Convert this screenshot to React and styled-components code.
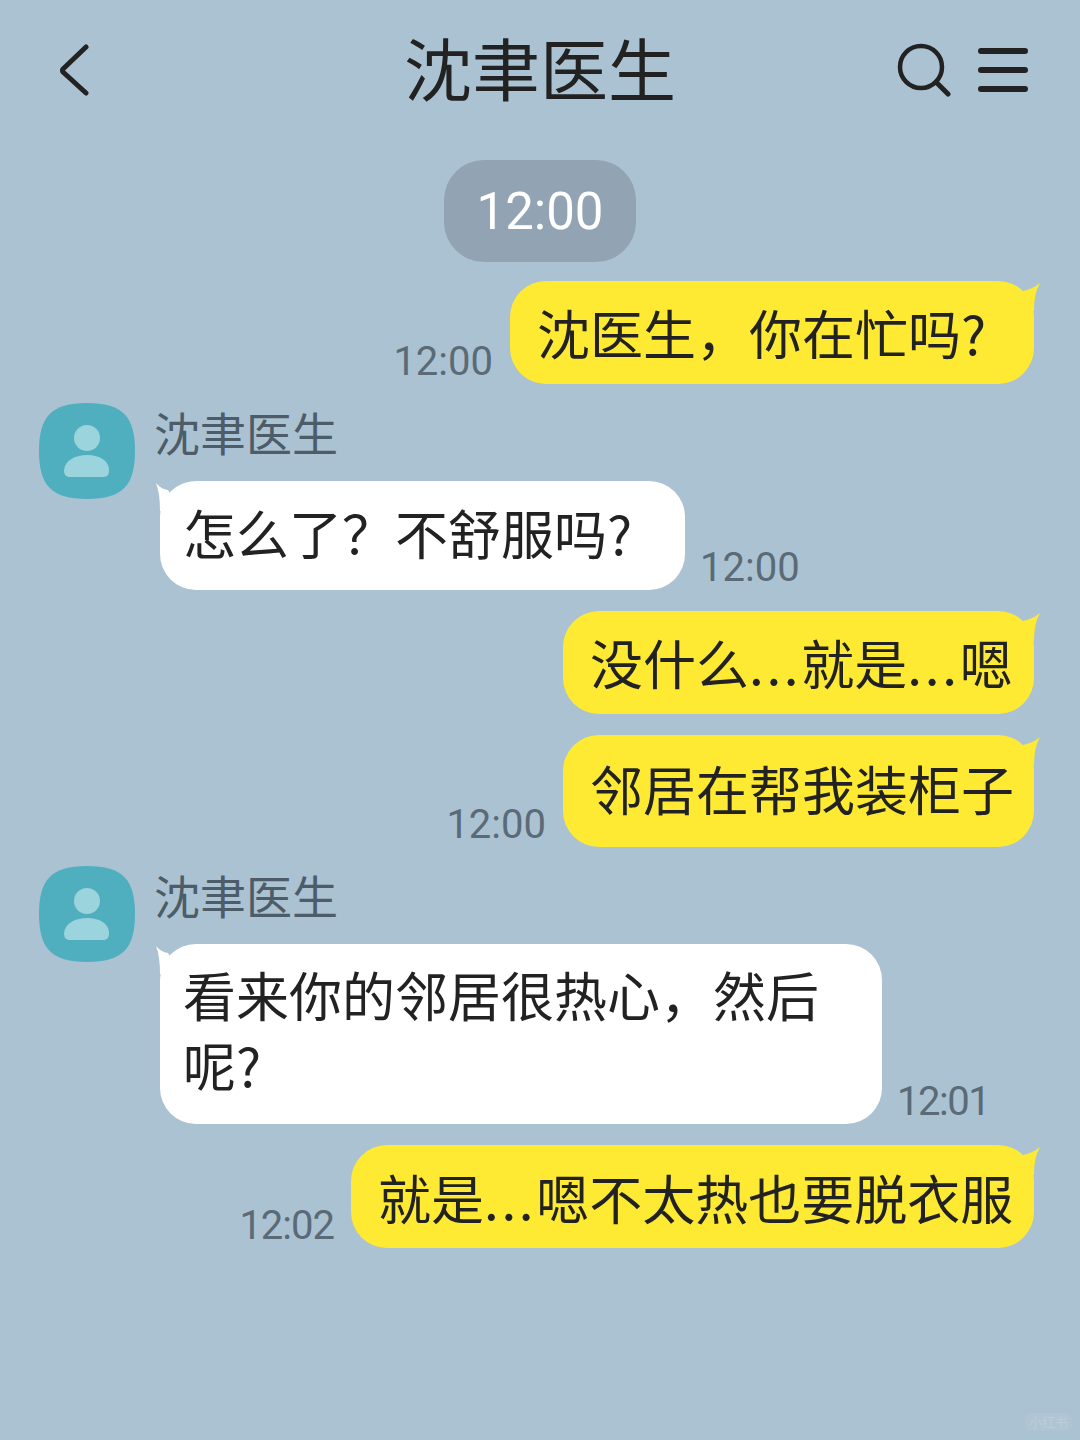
import { createGlobalStyle, styled } from "styled-components";

const GlobalStyle = createGlobalStyle`
  html, body {
    margin: 0;
    padding: 0;
    background: #abc2d2;
  }
`;

const Page = styled.div`
  position: relative;
  display: flex;
  flex-direction: column;
  width: 1080px;
  height: 1440px;
  overflow: hidden;
  background: #abc2d2;
  font-family: "Noto Sans CJK SC", "Noto Sans", sans-serif;
  color: #222;
`;

const Header = styled.header`
  display: grid;
  grid-template-columns: 1fr auto 1fr;
  align-items: center;
  height: 140px;
  padding: 0 52px 0 58px;
`;

const Title = styled.h1`
  margin: 0 6px 6px 0;
  font-size: 68px;
  font-weight: 400;
  line-height: 1;
  color: #222;
`;

const HeaderIcons = styled.div`
  justify-self: end;
  display: flex;
  align-items: center;
  gap: 27px;
`;

const TimePill = styled.div`
  align-self: center;
  display: flex;
  align-items: center;
  justify-content: center;
  width: 192px;
  height: 102px;
  margin: 20px 0 19px;
  border-radius: 40px;
  background: #92a4b4;
  color: #fff;
  font-family: Roboto, sans-serif;
  font-size: 51px;
  font-weight: 400;
`;

const Row = styled.div`
  display: flex;
  align-items: flex-end;
  justify-content: ${(p) => (p.$mine ? "flex-end" : "flex-start")};
  gap: ${(p) => (p.$mine ? "17px" : "15px")};
  margin-bottom: ${(p) => p.$after}px;
  padding: ${(p) => (p.$mine ? "0 46px 0 0" : "0 0 0 160px")};
`;

const Bubble = styled.div`
  position: relative;
  box-sizing: border-box;
  width: ${(p) => p.$width}px;
  height: ${(p) => p.$height}px;
  padding: ${(p) => p.$top}px 0 0 ${(p) => (p.$mine ? 27 : 23)}px;
  border-radius: 36px;
  background: ${(p) => (p.$mine ? "#ffea33" : "#ffffff")};
  font-size: 53px;
  line-height: 70px;
  color: #222;
  white-space: pre-line;

  &::before {
    content: "";
    position: absolute;
    top: 2px;
    ${(p) => (p.$mine ? "right: -6px;" : "left: -4px;")}
    width: 24px;
    height: 28px;
    background: inherit;
    clip-path: ${(p) =>
      p.$mine
        ? 'path("M7 8 Q17 6 24 0 Q18 10 18 28 L0 28 Z")'
        : 'path("M12 7 Q5 6 0 0 Q4 10 4 28 L24 28 Z")'};
  }
`;

const Dots = styled.span`
  letter-spacing: 2.7px;
`;

const Stamp = styled.span`
  margin-bottom: 2px;
  font-family: Roboto, sans-serif;
  font-size: 40px;
  font-weight: 400;
  line-height: 1;
  letter-spacing: ${(p) => p.$tight || 0}px;
  color: #5a6a76;
`;

const Sender = styled.div`
  display: flex;
  align-items: flex-start;
  gap: 20px;
  height: 78px;
  padding-left: 39px;
`;

const SenderName = styled.div`
  margin-left: -1px;
  font-size: 46px;
  font-weight: 400;
  line-height: 56px;
  color: #4c5c68;
`;

const Watermark = styled.div`
  position: absolute;
  right: 8px;
  bottom: 9px;
  padding: 0 4px;
  border-radius: 6px;
  font-size: 13px;
  line-height: 18px;
  color: rgba(255, 255, 255, 0.16);
  background: rgba(255, 255, 255, 0.06);
`;

const BackIcon = () => (
  <svg width="32" height="52" viewBox="0 0 32 52" fill="none">
    <path d="M28 3 L5 25 Q4 26.5 5 28 L28 49" stroke="#222" strokeWidth="5" strokeLinecap="round" strokeLinejoin="round" />
  </svg>
);

const SearchIcon = () => (
  <svg width="54" height="54" viewBox="0 0 54 54" fill="none">
    <circle cx="24" cy="24" r="21" stroke="#222" strokeWidth="4.5" />
    <path d="M39 39 L51 51" stroke="#222" strokeWidth="5" strokeLinecap="round" />
  </svg>
);

const MenuIcon = () => (
  <svg width="50" height="46" viewBox="0 0 50 46" fill="none">
    <path d="M3 4 H47 M3 23 H47 M3 42 H47" stroke="#222" strokeWidth="6" strokeLinecap="round" />
  </svg>
);

const Avatar = () => (
  <svg width="96" height="96" viewBox="0 0 96 96">
    <path d="M48 0 C84 0 96 14 96 48 C96 82 84 96 48 96 C12 96 0 82 0 48 C0 14 12 0 48 0 Z" fill="#4fafbf" />
    <circle cx="48" cy="35" r="13" fill="#9bd4dc" />
    <path d="M25 67 C26 57 37 52 48 52 C59 52 70 57 70 67 C70 72 68 74 64 74 H31 C27 74 25 72 25 67 Z" fill="#9bd4dc" />
  </svg>
);

export default function App() {
  return (
    <Page>
      <GlobalStyle />
      <Header>
        <BackIcon />
        <Title>沈聿医生</Title>
        <HeaderIcons>
          <SearchIcon />
          <MenuIcon />
        </HeaderIcons>
      </Header>

      <TimePill>12:00</TimePill>

      <Row $mine $after={19}>
        <Stamp>12:00</Stamp>
        <Bubble $mine $width={524} $height={103} $top={16}>沈医生，你在忙吗?</Bubble>
      </Row>

      <Sender>
        <Avatar />
        <SenderName>沈聿医生</SenderName>
      </Sender>
      <Row $after={21}>
        <Bubble $width={525} $height={109} $top={16}>怎么了？不舒服吗?</Bubble>
        <Stamp>12:00</Stamp>
      </Row>

      <Row $mine $after={21}>
        <Bubble $mine $width={471} $height={103} $top={16}>
          没什么<Dots>...</Dots>就是<Dots>...</Dots>嗯
        </Bubble>
      </Row>
      <Row $mine $after={19}>
        <Stamp>12:00</Stamp>
        <Bubble $mine $width={471} $height={112} $top={18}>邻居在帮我装柜子</Bubble>
      </Row>

      <Sender>
        <Avatar />
        <SenderName>沈聿医生</SenderName>
      </Sender>
      <Row $after={21}>
        <Bubble $width={722} $height={180} $top={15}>{"看来你的邻居很热心，然后\n呢?"}</Bubble>
        <Stamp $tight={-1.5}>12:01</Stamp>
      </Row>

      <Row $mine $after={0}>
        <Stamp $tight={-1}>12:02</Stamp>
        <Bubble $mine $width={683} $height={103} $top={17}>
          就是<Dots>...</Dots>嗯不太热也要脱衣服
        </Bubble>
      </Row>

      <Watermark>小红书</Watermark>
    </Page>
  );
}
